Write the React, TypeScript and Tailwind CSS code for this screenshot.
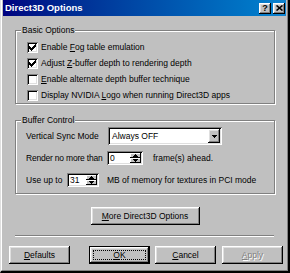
import React from "react";

const raised =
  "shadow-[inset_-1px_-1px_0_#000,inset_1px_1px_0_#fff,inset_-2px_-2px_0_#808080,inset_2px_2px_0_#dfdfdf]";
const sunken =
  "shadow-[inset_1px_1px_0_#808080,inset_-1px_-1px_0_#fff,inset_2px_2px_0_#000,inset_-2px_-2px_0_#dfdfdf]";
const etched = "border border-[#808080] shadow-[inset_1px_1px_0_#fff,1px_1px_0_#fff]";

// 7x7 win98 check glyph, [x, y, w]
const tick = [
  [6, 0, 1],
  [5, 1, 2],
  [0, 2, 1],
  [4, 2, 3],
  [0, 3, 2],
  [3, 3, 3],
  [0, 4, 5],
  [1, 5, 3],
  [2, 6, 1],
];

function Checkbox({ checked, children }: { checked?: boolean; children: React.ReactNode }) {
  return (
    <div className="flex h-[16px] items-center gap-[3px]">
      <span className={`relative h-[11px] w-[11px] shrink-0 bg-white ${sunken}`}>
        {checked && (
          <svg className="absolute left-[2px] top-[2px]" width="7" height="7" viewBox="0 0 7 7" shapeRendering="crispEdges">
            {tick.map(([x, y, w]) => (
              <rect key={`${x}-${y}`} x={x} y={y} width={w} height={1} fill="#000" />
            ))}
          </svg>
        )}
      </span>
      <span>{children}</span>
    </div>
  );
}

function Group({ label, className, children }: { label: string; className: string; children: React.ReactNode }) {
  return (
    <div className={`relative ml-[12px] mr-[11px] h-[74px] ${etched} ${className}`}>
      <span className="absolute left-[5px] top-[-7px] bg-[#c0c0c0] px-px leading-[12px]">{label}</span>
      {children}
    </div>
  );
}

function SpinBtn({ up }: { up?: boolean }) {
  return (
    <span className="flex flex-1 items-center justify-center bg-[#c0c0c0] shadow-[inset_-1px_-1px_0_#000,inset_1px_1px_0_#fff]">
      <svg width="5" height="3" viewBox="0 0 5 3" shapeRendering="crispEdges">
        <polygon points={up ? "2.5,0 5,3 0,3" : "0,0 5,0 2.5,3"} fill="#000" />
      </svg>
    </span>
  );
}

function Spin({ value, className }: { value: string; className: string }) {
  return (
    <div className={`flex h-[14px] shrink-0 bg-white p-[2px] ${sunken} ${className}`}>
      <span className="flex-1 pl-px leading-[10px]">{value}</span>
      <div className="flex w-[11px] flex-col">
        <SpinBtn up />
        <SpinBtn />
      </div>
    </div>
  );
}

function Button({ children, className = "", isDefault, disabled }: { children: React.ReactNode; className?: string; isDefault?: boolean; disabled?: boolean }) {
  const label = (
    <span className={disabled ? "text-[#808080] [text-shadow:1px_1px_0_#fff]" : ""}>{children}</span>
  );
  if (isDefault) {
    return (
      <div className={`h-[18px] border border-black ${className}`}>
        <div className={`relative flex h-full items-center justify-center bg-[#c0c0c0] ${raised}`}>
          <span className="absolute inset-[3px] border border-dotted border-black" />
          {label}
        </div>
      </div>
    );
  }
  return (
    <div className={`flex h-[18px] items-center justify-center bg-[#c0c0c0] ${raised} ${className}`}>{label}</div>
  );
}

export default function App() {
  return (
    <div className="h-[273px] w-[290px] whitespace-nowrap border-b-2 border-l border-r-2 border-b-black border-l-[#dfdfdf] border-r-black bg-[#c0c0c0] font-['Liberation_Sans',Arial,sans-serif] text-[8.5px] leading-[12px] text-black">
      <div className="flex h-full flex-col border-b border-l border-r border-b-[#808080] border-l-white border-r-[#808080] px-px">
        {/* caption */}
        <div className="flex h-[16px] shrink-0 items-center bg-linear-to-r from-[#000080] to-[#1084d0] pl-[2px] pr-[1px]">
          <span className="flex-1 text-[9.5px] font-bold text-white">Direct3D Options</span>
          <div className="flex gap-[2px]">
            <span className={`flex h-[11px] w-[12px] items-center justify-center bg-[#c0c0c0] text-[9px] font-bold leading-none ${raised}`}>
              ?
            </span>
            <span className={`flex h-[11px] w-[12px] items-center justify-center bg-[#c0c0c0] ${raised}`}>
              <svg width="7" height="6" viewBox="0 0 7 6">
                <path d="M0.5 0.5 L6.5 5.5 M6.5 0.5 L0.5 5.5" stroke="#000" strokeWidth="1.6" />
              </svg>
            </span>
          </div>
        </div>

        <Group label="Basic Options" className="mt-[14px] pl-[11px] pt-[8px]">
          <Checkbox checked>
            Enable <u>F</u>og table emulation
          </Checkbox>
          <Checkbox checked>
            Adjust <u>Z</u>-buffer depth to rendering depth
          </Checkbox>
          <Checkbox>
            <u>E</u>nable alternate depth buffer technique
          </Checkbox>
          <Checkbox>
            Display NVIDIA <u>L</u>ogo when running Direct3D apps
          </Checkbox>
        </Group>

        <Group label="Buffer Control" className="mt-[16px] pl-[10px] pt-[4px]">
          <div className="flex h-[22px] items-center">
            <span className="w-[82px]">Vertical Sync Mode</span>
            <div className={`flex h-[18px] w-[114px] bg-white p-[2px] ${sunken}`}>
              <span className="flex-1 pl-[2px] leading-[14px]">Always OFF</span>
              <span className={`flex h-[14px] w-[12px] items-center justify-center bg-[#c0c0c0] ${raised}`}>
                <svg width="5" height="3" viewBox="0 0 5 3" shapeRendering="crispEdges">
                  <polygon points="0,0 5,0 2.5,3" fill="#000" />
                </svg>
              </span>
            </div>
          </div>
          <div className="flex h-[22px] items-center">
            <span className="mr-px min-w-[80px] shrink-0 tracking-[-0.2px]">Render no more than</span>
            <Spin value="0" className="w-[36px]" />
            <span className="ml-[10px]">frame(s) ahead.</span>
          </div>
          <div className="flex h-[22px] items-center">
            <span className="w-[41px]">Use up to</span>
            <Spin value="31" className="w-[32px]" />
            <span className="ml-[8px]">MB of memory for textures in PCI mode</span>
          </div>
        </Group>

        <div className="ml-[12px] mr-[11px] mt-[13px] flex justify-center">
          <Button className="w-[109px]">
            <u>M</u>ore Direct3D Options
          </Button>
        </div>

        <div className="ml-[12px] mr-[12px] mt-[10px] h-[2px] border-b border-t border-b-white border-t-[#808080]" />

        <div className="mt-[9px] flex pl-[6px]">
          <Button className="w-[61px]">
            <u>D</u>efaults
          </Button>
          <Button isDefault className="ml-[19px] w-[61px]">
            <u>O</u>K
          </Button>
          <Button className="ml-[5px] w-[61px]">
            <u>C</u>ancel
          </Button>
          <Button disabled className="ml-[6px] w-[61px]">
            <u>A</u>pply
          </Button>
        </div>
      </div>
    </div>
  );
}
